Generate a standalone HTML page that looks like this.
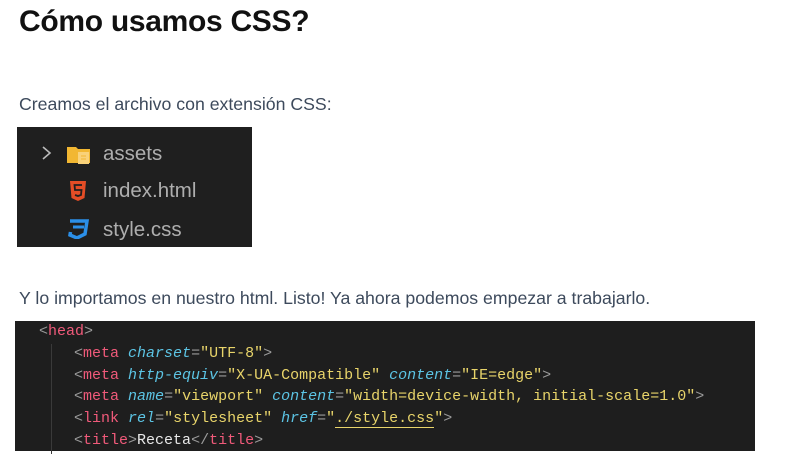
<!DOCTYPE html>
<html><head><meta charset="utf-8"><style>
body{margin:0;width:786px;height:447px;background:#fff;overflow:hidden;font-family:"Liberation Sans",sans-serif;position:relative}
h1{position:absolute;left:19px;top:5px;margin:0;font-size:30px;font-weight:bold;color:#111;letter-spacing:-0.3px}
.p{position:absolute;left:19px;font-size:17.7px;color:#3d4a5c}
.img{position:absolute;left:17px;top:127px;width:235px;height:120px;background:#1f1f1f}
.img .r{position:absolute;left:86px;font-size:20.5px;color:#aeaeae}
.code{position:absolute;left:15px;top:321px;width:740px;height:130px;background:#1e1e1e;font-family:"Liberation Mono",monospace;font-size:15px;color:#9a9a9a}
.l{position:absolute;white-space:pre;line-height:20px}
.t{color:#f05a7a}.a{color:#5cc4e4;font-style:italic}.s{color:#e8d46a}.w{color:#e8e8e8}
.g{position:absolute;left:36px;top:23px;width:1px;height:110px;background:#3a3a3a}
</style></head><body>
<h1>Cómo usamos CSS?</h1>
<div class="p" style="top:94px">Creamos el archivo con extensión CSS:</div>
<div class="img">
<svg style="position:absolute;left:24px;top:18px" width="12" height="16"><path d="M2 2l7 6-7 6" stroke="#bbb" stroke-width="1.6" fill="none"/></svg>
<svg style="position:absolute;left:49px;top:17px" width="28" height="22"><path d="M1 3h9l2 2h12v14H1z" fill="#f2b732"/><rect x="12" y="8" width="11" height="12" fill="#f9d27a"/><path d="M15 12h5M15 15h5" stroke="#f2b732"/></svg>
<div class="r" style="top:15px">assets</div>
<svg style="position:absolute;left:52px;top:53px" width="18" height="22"><path d="M1 1h16l-1.5 17L9 21l-6.5-3z" fill="#e44d26"/><path d="M13 5H5.5l.5 5h6.5l-.5 5-3 1-3-1" stroke="#1f1f1f" stroke-width="1.8" fill="none"/></svg>
<div class="r" style="top:52px">index.html</div>
<svg style="position:absolute;left:50px;top:92px" width="22" height="20"><path d="M3 2h17l-2 13-8 4-7-3 .5-3" stroke="#2b8fe8" stroke-width="3.5" fill="none"/><path d="M6 8h11" stroke="#2b8fe8" stroke-width="3"/></svg>
<div class="r" style="top:91px">style.css</div>
</div>
<div class="p" style="top:288px">Y lo importamos en nuestro html. Listo! Ya ahora podemos empezar a trabajarlo.</div>
<div class="code">
<div class="g"></div>
<div class="l" style="left:24px;top:1px">&lt;<span class="t">head</span>&gt;</div>
<div class="l" style="left:59px;top:23px">&lt;<span class="t">meta</span> <span class="a">charset</span>=<span class="s">"UTF-8"</span>&gt;</div>
<div class="l" style="left:59px;top:45px">&lt;<span class="t">meta</span> <span class="a">http-equiv</span>=<span class="s">"X-UA-Compatible"</span> <span class="a">content</span>=<span class="s">"IE=edge"</span>&gt;</div>
<div class="l" style="left:59px;top:66px">&lt;<span class="t">meta</span> <span class="a">name</span>=<span class="s">"viewport"</span> <span class="a">content</span>=<span class="s">"width=device-width, initial-scale=1.0"</span>&gt;</div>
<div class="l" style="left:59px;top:88px">&lt;<span class="t">link</span> <span class="a">rel</span>=<span class="s">"stylesheet"</span> <span class="a">href</span>=<span class="s">"<span style="border-bottom:1.5px solid #e8d46a">./style.css</span>"</span>&gt;</div>
<div class="l" style="left:59px;top:110px">&lt;<span class="t">title</span>&gt;<span class="w">Receta</span>&lt;/<span class="t">title</span>&gt;</div>
</div>
</body></html>
